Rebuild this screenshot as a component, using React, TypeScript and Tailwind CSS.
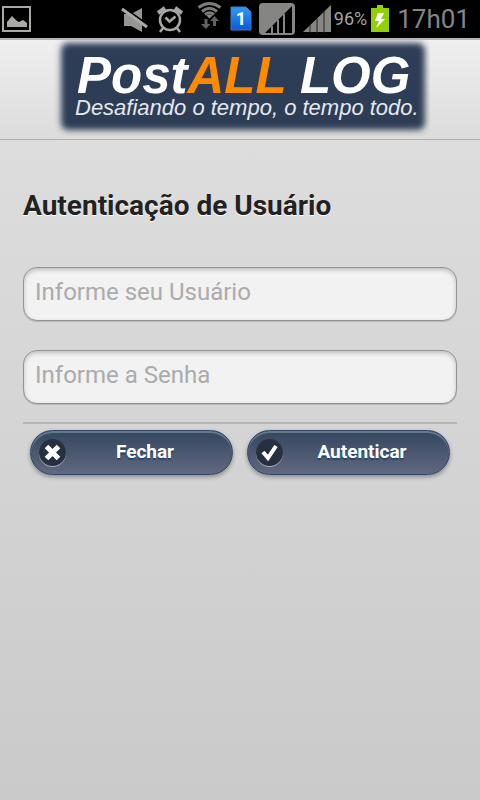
import React, { useState } from 'react';

function StatusBar() {
  return (
    <div className="flex h-[38px] items-center bg-black pr-[10px] text-[#9b9b98]">
      <svg className="ml-[2px] h-[38px] w-[30px]" viewBox="0 0 30 38" fill="none">
        <rect x="1" y="7" width="27" height="24" stroke="#aaaaa5" strokeWidth="2" />
        <path d="M5 27v-5l5-6 5 5 2 1 4-2 4 3v4z" fill="#aaaaa5" />
      </svg>

      <div className="ml-auto flex items-center">
        <svg className="h-[38px] w-7" viewBox="0 0 28 38">
          <path d="M3 14h7l11-6v24l-11-6H3z" fill="#969693" />
          <path d="M2 7l25 18" stroke="#000" strokeWidth="2" />
          <path d="M1 9l25 18" stroke="#aaaaa7" strokeWidth="3" />
        </svg>
        <svg className="ml-2 h-[38px] w-[26px]" viewBox="0 0 26 38" fill="none" stroke="#a6a6a3" strokeWidth="2">
          <circle cx="13" cy="20" r="10" strokeWidth="2.5" />
          <path d="M8.500 17.500l4 4 6-5M6 28l-3 4M20 28l3 4" strokeWidth="2.500" />
          <path d="M1 13l7-5M25 13l-7-5" strokeWidth="4" />
        </svg>
        <svg className="ml-[13px] h-[38px] w-7" viewBox="0 0 28 38" fill="none">
          <path d="M2.500 7.500Q13.500-.500 24.500 7.500M6 11.500q7.500-6.500 15 0M9 14.500q4.500-3.500 9 0" stroke="#7c7c79" strokeWidth="3" />
          <path d="M10.500 15.500q3-2 6 0l-3 3z" fill="#8c8c89" />
          <path d="M8.500 19h3v5h3l-4.500 5-5-5h3.500z" fill="#626260" />
          <path d="M17 26v-5h-3l4.500-5 4.500 5h-3v5z" fill="#626260" />
        </svg>
        <svg className="ml-[6px] h-[38px] w-[22px]" viewBox="0 0 22 38">
          <defs>
            <linearGradient id="sim" x2="0" y2="1">
              <stop stopColor="#2f9af5" />
              <stop offset="1" stopColor="#0c57d8" />
            </linearGradient>
          </defs>
          <path d="M1 7h15l5 5v18H1z" fill="url(#sim)" stroke="#3d7fc4" />
          <text x="11" y="25" textAnchor="middle" fill="#fff" fontFamily="Roboto, sans-serif" fontSize="18" fontWeight="700">1</text>
        </svg>
        <svg className="ml-[7px] h-[38px] w-9" viewBox="0 0 36 38">
          <rect y="3" width="36" height="32" rx="4" fill="#858583" />
          <path d="M6 33L33 6v27z" fill="#000" />
          <path d="M13 26v7M19 20v13M25 14v19" stroke="#858583" strokeWidth="2" />
        </svg>
        <svg className="ml-2 h-[38px] w-7" viewBox="0 0 28 38">
          <path d="M0 32L28 5v27z" fill="#878784" />
          <path d="M7 24v9M14 17v16M21 10v23" stroke="#222" strokeWidth="1" />
        </svg>
        <span className="ml-[3px] text-lg text-[#a3a3a0]">96%</span>
        <svg className="ml-1 h-[38px] w-[18px]" viewBox="0 0 18 38">
          <path d="M0 8h6V5h6v3h6v24H0z" fill="#92cf05" />
          <path d="M7 13h6l-3 6h4l-9 9 3-7H4z" fill="#fff" />
        </svg>
        <span className="ml-2 text-[26px] leading-9 text-[#858582]">17h01</span>
      </div>
    </div>
  );
}

function Logo() {
  return (
    <svg className="h-[97px] w-[380px]" viewBox="0 0 380 97" role="img" aria-label="PostALL LOG">
      <defs>
        <filter id="soft" x="-10%" y="-20%" width="120%" height="140%">
          <feGaussianBlur stdDeviation="3" />
        </filter>
      </defs>
      <rect x="11" y="3" width="364" height="87" rx="7" fill="#2d3d57" filter="url(#soft)" />
      <g fontFamily="'Liberation Sans', sans-serif" fontStyle="italic" fill="#fff">
        <text x="27" y="53" fontSize="51" fontWeight="700">
          Post<tspan fill="#ff8a00">ALL</tspan> LOG
        </text>
        <text x="25" y="75" fontSize="22" fill="#e4e8ef">Desafiando o tempo, o tempo todo.</text>
      </g>
    </svg>
  );
}

function Field({ id, label, type, value, onChange }: {
  id: string;
  label: string;
  type: string;
  value: string;
  onChange: (value: string) => void;
}) {
  return (
    <input
      id={id}
      type={type}
      aria-label={label}
      placeholder={label}
      value={value}
      onChange={(e) => onChange(e.target.value)}
      className="block h-[54px] w-full rounded-[14px] border border-[#939393] bg-[#f2f2f2] px-[11px] pb-1 text-2xl text-[#333] shadow-[inset_0_2px_4px_rgba(0,0,0,0.22),0_1px_0_#b8b8b8] outline-none placeholder:text-[#ababab]"
    />
  );
}

function ActionButton({ type, icon, children }: {
  type: 'button' | 'submit';
  icon: React.ReactNode;
  children: React.ReactNode;
}) {
  return (
    <button
      type={type}
      className="flex h-[45px] flex-1 items-center rounded-full border border-[#304567] bg-linear-to-b from-[#34465f] to-[#606980] px-2 text-[19px] font-bold text-white shadow-[inset_0_2px_0_#63798c,0_2px_4px_rgba(0,0,0,0.35)] [text-shadow:0_2px_1px_#23486f]"
    >
      <span className="flex size-[27px] items-center justify-center rounded-full bg-[#27303f] shadow-[0_1px_0_#a5abb8]">
        {icon}
      </span>
      <span className="flex-1 text-center">{children}</span>
    </button>
  );
}

export default function App() {
  const [user, setUser] = useState('');
  const [password, setPassword] = useState('');

  return (
    <div className="flex min-h-screen flex-col bg-[#d0d0d0] font-[Roboto,sans-serif]">
      <StatusBar />
      <header className="flex justify-center border-t-2 border-b border-t-[#b5b5b5] border-b-[#afafaf] bg-linear-to-b from-[#efefef] to-[#dcdcdc] pb-[2px]">
        <Logo />
      </header>

      <main className="flex-1 bg-linear-to-b from-[#dddddd] to-[#cacaca] px-[23px] pt-12">
        <h1 className="text-[28px] leading-9 font-bold text-[#222] [text-shadow:0_1px_0_#fff]">
          Autenticação de Usuário
        </h1>
        <form onSubmit={(e) => e.preventDefault()}>
          <div className="mt-[43px] flex flex-col gap-[29px]">
            <Field id="usuario" label="Informe seu Usuário" type="text" value={user} onChange={setUser} />
            <Field id="senha" label="Informe a Senha" type="password" value={password} onChange={setPassword} />
          </div>
          <div className="mt-[18px] flex gap-[14px] border-t-2 border-[#b5b5b5] px-[7px] pt-[6px]">
            <ActionButton
              type="button"
              icon={
                <svg className="size-[27px]" viewBox="0 0 27 27" stroke="#fff" strokeWidth="5">
                  <path d="M7.500 7.500l12 12M19.500 7.500l-12 12" />
                </svg>
              }
            >
              Fechar
            </ActionButton>
            <ActionButton
              type="submit"
              icon={
                <svg className="size-[27px]" viewBox="0 0 27 27" fill="none" stroke="#fff" strokeWidth="4">
                  <path d="M7 13l5 6 8-12" />
                </svg>
              }
            >
              Autenticar
            </ActionButton>
          </div>
        </form>
      </main>
    </div>
  );
}
